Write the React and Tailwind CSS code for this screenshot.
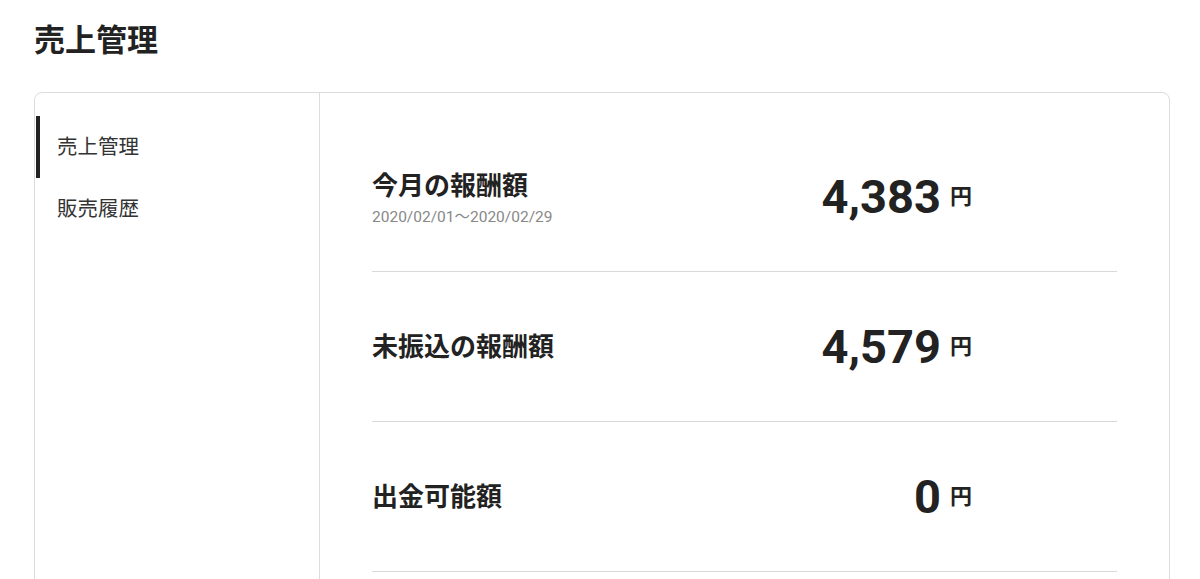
const rows = [
  { label: "今月の報酬額", sub: "2020/02/01〜2020/02/29", value: "4,383" },
  { label: "未振込の報酬額", value: "4,579" },
  { label: "出金可能額", value: "0" },
];

const menu = [
  { label: "売上管理", active: true },
  { label: "販売履歴" },
];

export default function App() {
  return (
    <div
      className="min-h-screen bg-white pl-[34px] pr-[30px] text-[#222]"
      style={{ fontFamily: "Roboto, 'Noto Sans CJK JP', sans-serif" }}
    >
      <h1 className="pt-[21px] text-[31px] font-bold leading-[40px]">売上管理</h1>

      <div className="mt-[31px] flex min-h-[560px] rounded-lg border border-[#dcdcdc]">
        {/* side menu */}
        <nav className="w-[285px] shrink-0 border-r border-[#dcdcdc] pt-[23px]">
          {menu.map((item) => (
            <div key={item.label} className="flex h-[62px] items-center">
              <span
                className={`ml-px h-full w-[4px] ${item.active ? "bg-[#222]" : "bg-transparent"}`}
              />
              <span className="pl-[17px] text-[20.5px] text-[#333]">{item.label}</span>
            </div>
          ))}
        </nav>

        {/* summary */}
        <div className="flex-1 px-[52px] pt-[29px]">
          {rows.map((row) => (
            <div
              key={row.label}
              className="flex h-[150px] items-center justify-between border-b border-[#d9d9d9] pr-[145px]"
            >
              <div className={row.sub ? "mt-[2px]" : ""}>
                <p className="text-[26px] font-bold leading-[34px]">{row.label}</p>
                {row.sub && (
                  <p className="mt-[4px] text-[15.5px] leading-[20px] text-[#888]">{row.sub}</p>
                )}
              </div>
              <div className="flex items-center">
                <span className="text-[47px] font-bold leading-none">{row.value}</span>
                <span className="ml-[9px] text-[22px] font-bold leading-none">円</span>
              </div>
            </div>
          ))}
        </div>
      </div>
    </div>
  );
}
